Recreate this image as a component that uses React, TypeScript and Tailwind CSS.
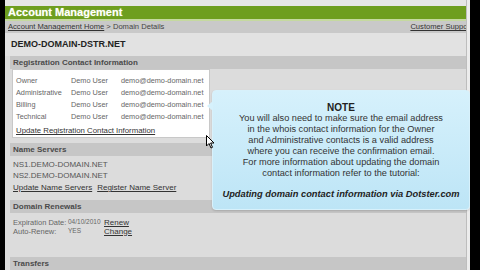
import React from "react";

const Header = ({ children }: { children: React.ReactNode }) => (
  <div className="h-[13px] bg-[#c6c6c6] pl-[3px] flex items-center text-[8px] font-bold text-[#4a4a4a] leading-none whitespace-nowrap">
    {children}
  </div>
);

export default function App() {
  const contacts = [
    ["Owner", "Demo User", "demo@demo-domain.net"],
    ["Administrative", "Demo User", "demo@demo-domain.net"],
    ["Billing", "Demo User", "demo@demo-domain.net"],
    ["Technical", "Demo User", "demo@demo-domain.net"],
  ];
  return (
    <div className="w-[480px] h-[270px] bg-black flex overflow-hidden font-['Liberation_Sans',Arial,sans-serif]">
      <div className="ml-[5px] w-[465px] h-full bg-[#dcdcdc] flex relative overflow-hidden">
        <div className="w-[461px] flex flex-col">
          <div className="h-[6px] bg-[#e6e6e6]" />
          <div className="h-[14px] bg-[#6e9e1f] flex items-center pl-[3px] text-white font-bold text-[11px] leading-none [text-shadow:0_0_1px_#c9e08f]">
            Account Management
          </div>
          <div className="h-[2px] bg-[#c5d9a0]" />
          <div className="h-[12px] bg-[#c9c9c9] flex items-center justify-between pl-[3px] text-[7.6px] leading-none text-[#444] whitespace-nowrap">
            <span>
              <span className="underline text-[#333]">Account Management Home</span> &gt; Domain Details
            </span>
            <span className="underline text-[#333] mr-[-6px]">Customer Support</span>
          </div>
          <div className="h-[24px] bg-[#e2e2e2] flex items-center pl-[6px] text-[9px] font-bold text-[#222] leading-none">
            DEMO-DOMAIN-DSTR.NET
          </div>
          <div className="pl-[5px] flex flex-col">
            <Header>Registration Contact Information</Header>
            <div className="w-[198px] h-[69px] bg-white border border-[#c8c8c8] flex flex-col pl-[3px] pt-[4px] text-[7.3px] text-[#666] leading-none ml-[2px] whitespace-nowrap">
              {contacts.map((c) => (
                <div key={c[0]} className="flex h-[12.3px] items-center">
                  <span className="w-[55px]">{c[0]}</span>
                  <span className="w-[50px]">{c[1]}</span>
                  <span>{c[2]}</span>
                </div>
              ))}
              <div className="mt-[4px] underline text-[#333] text-[7.8px]">Update Registration Contact Information</div>
            </div>
            <div className="h-[5px]" />
            <Header>Name Servers</Header>
            <div className="flex flex-col pl-[3px] pt-[3px] text-[8px] text-[#555] leading-none whitespace-nowrap">
              <div className="h-[11px] flex items-center">NS1.DEMO-DOMAIN.NET</div>
              <div className="h-[11px] flex items-center">NS2.DEMO-DOMAIN.NET</div>
              <div className="h-[14px] flex items-center gap-[5px] text-[#333]">
                <span className="underline">Update Name Servers</span>
                <span className="underline">Register Name Server</span>
              </div>
            </div>
            <div className="h-[5px]" />
            <Header>Domain Renewals</Header>
            <div className="flex flex-col pl-[3px] pt-[5px] text-[7.5px] text-[#666] leading-none whitespace-nowrap">
              <div className="h-[9px] flex items-center">
                <span className="w-[55px]">Expiration Date:</span>
                <span className="w-[36px] text-[6.5px]">04/10/2010</span>
                <span className="underline text-[#333] text-[8px]">Renew</span>
              </div>
              <div className="h-[9px] flex items-center">
                <span className="w-[55px]">Auto-Renew:</span>
                <span className="w-[36px] text-[6.5px]">YES</span>
                <span className="underline text-[#333] text-[8px]">Change</span>
              </div>
            </div>
            <div className="h-[21px]" />
            <Header>Transfers</Header>
          </div>
        </div>
        <div className="w-[4px] bg-[#ececec] border-l border-[#bdbdbd]" />

        {/* Note overlay */}
        <div className="absolute left-[207px] top-[90px] w-[258px] h-[120px] rounded-[4px] border border-[#d8f1fb] bg-gradient-to-b from-[#d6f1fc] to-[#bde5f6] shadow-[0_1px_2px_rgba(0,0,0,0.15)] flex flex-col items-center text-center text-[#222] leading-[11px] pt-[11px]">
          <div className="absolute left-[-6px] top-[10px] w-0 h-0 border-y-[5px] border-y-transparent border-r-[6px] border-r-[#d6f1fc]" />
          <div className="font-bold text-[10px]">NOTE</div>
          <div className="text-[9.2px] text-[#333]">
            You will also need to make sure the email address
            <br />
            in the whois contact information for the Owner
            <br />
            and Administrative contacts is a valid address
            <br />
            where you can receive the confirmation email.
            <br />
            For more information about updating the domain
            <br />
            contact information refer to the tutorial:
          </div>
          <div className="mt-[10px] font-bold italic text-[9.3px] text-[#222]">
            Updating domain contact information via Dotster.com
          </div>
        </div>

        {/* Cursor */}
        <svg className="absolute left-[201px] top-[135px]" width="9" height="14" viewBox="0 0 9 14">
          <path d="M0.5 0.5 L0.5 11 L3 8.5 L5 13 L6.5 12.3 L4.6 8 L8 8 Z" fill="#fff" stroke="#000" strokeWidth="1" />
        </svg>
      </div>
    </div>
  );
}
